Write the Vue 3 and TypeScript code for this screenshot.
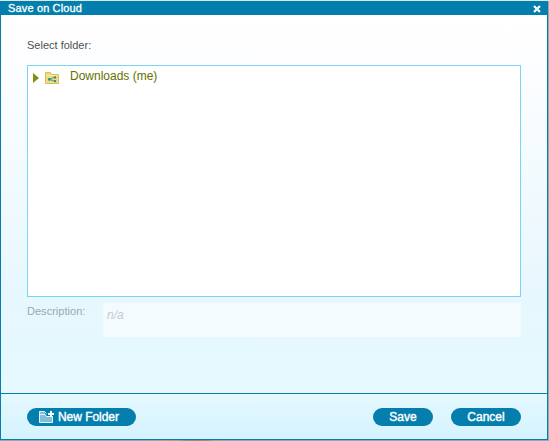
<script setup lang="ts">
import { ref } from 'vue'

interface Folder {
  id: number
  name: string
}

const folders: Folder[] = [{ id: 1, name: 'Downloads (me)' }]
const selected = ref<number | null>(null)
</script>

<template>
  <div class="page">
    <section class="dialog" role="dialog">
      <header class="titlebar">
        <span class="title">Save on Cloud</span>
        <button class="close">
          <svg width="8" height="8" viewBox="0 0 8 8"><path d="M1 1L7 7M7 1L1 7" stroke="#fff" stroke-width="2.1" /></svg>
        </button>
      </header>
      <main class="content">
        <div class="label">Select folder:</div>
        <div class="tree">
          <div v-for="folder in folders" :key="folder.id" class="node" @click="selected = folder.id">
            <svg class="arrow" width="6" height="10" viewBox="0 0 6 10"><path d="M0 0L6 5L0 10Z" fill="#819013" /></svg>
            <svg class="folder" width="14" height="12" viewBox="0 0 14 12">
              <path d="M.5 11.5V.5H5.5L6.5 2.5H13.5V11.5Z" fill="#f1da80" stroke="#d6bd60" />
              <path d="M1 3.5H13" stroke="#faeaa0" />
              <path d="M10 5.2L4.5 7.4L10 9.2" fill="none" stroke="#4fa08c" stroke-width="1" />
              <circle cx="4.3" cy="7.4" r="1.3" fill="#258c8b" />
              <circle cx="10" cy="5.4" r="1.2" fill="#258c8b" />
              <circle cx="10" cy="9.1" r="1.2" fill="#258c8b" />
            </svg>
            <span class="name">{{ folder.name }}</span>
          </div>
        </div>
        <div class="description">
          <span class="caption">Description:</span>
          <div class="field">n/a</div>
        </div>
      </main>
      <footer class="actions">
        <button class="btn create">
          <svg width="15" height="12" viewBox="0 0 15 12">
            <path d="M.5 11.5V.5H5.5L7.5 5.5H13.5V11.5Z" fill="#83bed7" />
            <path d="M.5 11.5V.5H5.5L7.5 2.5M.5 3.5H6L7.5 5.5H13.5V11.5H.5" fill="none" stroke="#e3f5fc" />
            <path d="M9 3H15M12 0V6" stroke="#fff" stroke-width="2" />
          </svg>
          <span class="create-text">New Folder</span>
        </button>
        <button class="btn save"><span>Save</span></button>
        <button class="btn cancel"><span>Cancel</span></button>
      </footer>
    </section>
  </div>
</template>

<style>
body {
  margin: 0;
  overflow: hidden;
}
</style>

<style scoped>
.page {
  box-sizing: border-box;
  width: 549px;
  height: 441px;
  padding: 1px 1px 1px 0;
  background:
    linear-gradient(90deg, transparent 155px, #bda184 165px, #a9a08c 180px, #729fae 184px, #a18b78 195px, #a18b78 205px, transparent 215px) 0 440px / 549px 1px no-repeat,
    linear-gradient(#d9e8e8, #d9e8e8) 0 0 / 549px 1px no-repeat,
    #9aa9ae;
  font-family: "Liberation Sans", Arial, sans-serif;
}
.dialog {
  box-sizing: border-box;
  display: flex;
  flex-direction: column;
  height: 439px;
  border: 1px solid #047fad;
  border-top: 0;
  background: linear-gradient(#fff 14px, #fefeff 45px, #e7f7fe 300px, #e5f9ff 380px);
}
.titlebar {
  display: flex;
  align-items: center;
  justify-content: space-between;
  height: 14px;
  padding: 0 6px 0 7px;
  background: #047fad;
  color: #fff;
  font-size: 11px;
  line-height: 14px;
}
.title {
  letter-spacing: 0.15px;
  -webkit-text-stroke: 0.3px #fff;
}
button {
  border: 0;
  padding: 0;
  font-family: inherit;
}
.close {
  display: flex;
  margin-top: 2px;
  background: transparent;
}
.content {
  flex: 1;
  padding: 23px 26px 0;
}
.label {
  height: 27px;
  color: #4b5154;
  font-size: 11px;
  line-height: 14px;
  letter-spacing: 0;
}
.tree {
  box-sizing: border-box;
  width: 494px;
  height: 232px;
  border: 1px solid #7bd3f6;
  background: #fff;
}
.node {
  display: flex;
  align-items: center;
  height: 22px;
  padding-left: 5px;
}
.arrow {
  margin-top: 2px;
}
.folder {
  margin: 1px 11px 0 6px;
}
.name {
  color: #637000;
  font-size: 12px;
  line-height: 16px;
  letter-spacing: 0;
  margin-top: -3px;
}
.description {
  display: flex;
  padding-top: 6px;
}
.caption {
  width: 76px;
  color: #9aa9af;
  font-size: 11px;
  line-height: 17px;
  letter-spacing: 0.03px;
}
.field {
  box-sizing: border-box;
  width: 418px;
  height: 34px;
  padding: 4px;
  background: #f4fbff;
  color: #c6cbce;
  font-size: 12px;
  font-style: italic;
  line-height: 16px;
}
.actions {
  box-sizing: border-box;
  display: flex;
  height: 46px;
  padding: 14px 26px 0;
  border-top: 1px solid #047fad;
  background: linear-gradient(#e5f8ff, #d4f3ff);
}
.btn {
  display: flex;
  align-items: center;
  justify-content: center;
  height: 18px;
  border-radius: 9px;
  background: #047fad;
  color: #fff;
  font-size: 12px;
  line-height: 18px;
  -webkit-text-stroke: 0.4px #fff;
}
.create {
  justify-content: flex-start;
  width: 109px;
  padding-left: 12px;
  gap: 4px;
}
.create-text {
  letter-spacing: -0.05px;
}
.save {
  width: 60px;
  margin-left: auto;
}
.cancel {
  width: 70px;
  margin-left: 18px;
}
</style>
